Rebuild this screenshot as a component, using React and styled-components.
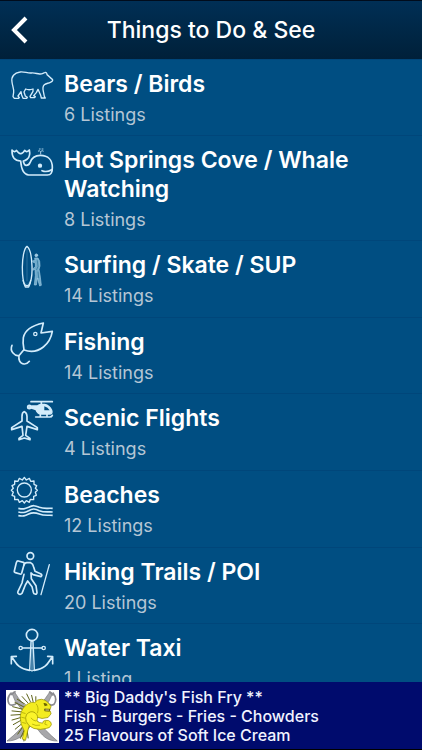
import React from "react";
import styled, { createGlobalStyle } from "styled-components";

const GlobalStyle = createGlobalStyle`
  * { box-sizing: border-box; }
  body {
    margin: 0;
    background: #000;
    font-family: Inter, "Liberation Sans", sans-serif;
    -webkit-font-smoothing: antialiased;
  }
`;

const Screen = styled.div`
  display: flex;
  flex-direction: column;
  height: 100vh;
  overflow: hidden;
  background: #004e82;
`;

const Header = styled.header`
  display: grid;
  grid-template-columns: 40px 1fr 40px;
  align-items: center;
  flex: none;
  height: 59px;
  border-top: 1px solid #000c1c;
  background: linear-gradient(#002f55, #002039);
`;

const BackButton = styled.button`
  display: flex;
  align-items: center;
  justify-content: center;
  height: 44px;
  padding: 0;
  border: 0;
  background: none;
  color: #fff;
  cursor: pointer;
`;

const PageTitle = styled.h1`
  margin: 0;
  color: #fff;
  font-size: 23px;
  font-weight: 500;
  line-height: 28px;
  text-align: center;
  white-space: nowrap;
`;

const List = styled.ul`
  flex: 1;
  min-height: 0;
  margin: 0;
  padding: 0;
  overflow-y: auto;
  list-style: none;
  scrollbar-width: none;
`;

const Item = styled.li`
  display: flex;
  min-height: 77px;
  border-top: 1px solid #00467a;

  &:nth-child(3n + 1) {
    min-height: 76px;
  }
`;

const ItemLink = styled.a`
  display: flex;
  flex: 1;
  gap: 8px;
  padding: 0 16px 0 8px;
  color: #fff;
  text-decoration: none;
`;

const ItemIcon = styled.svg`
  flex: none;
  width: 48px;
  height: 60px;
  fill: none;
  stroke: #d3ecfb;
  stroke-width: 5;
  stroke-linecap: round;
  stroke-linejoin: round;
`;

const ItemText = styled.div`
  padding: 10px 0 8px;
`;

const ItemTitle = styled.h2`
  margin: 0 0 4px;
  font-size: 23px;
  font-weight: 600;
  line-height: 29px;
`;

const ItemCount = styled.p`
  margin: 0;
  color: #b5c6d5;
  font-size: 18px;
  line-height: 24px;
`;

const Banner = styled.a`
  display: flex;
  align-items: center;
  flex: none;
  gap: 5px;
  height: 68px;
  padding: 1px 6px 0;
  border-bottom: 1px solid #000;
  background: #000b6d;
  color: #f1f3ff;
  text-decoration: none;
`;

const BannerLogo = styled.svg`
  flex: none;
  width: 53px;
  height: 53px;
`;

const BannerText = styled.p`
  margin: 0;
  font-size: 16px;
  font-weight: 500;
  line-height: 19px;
  white-space: pre-line;
`;

const Bear = () => (
  <ItemIcon viewBox="24 0 144 180" aria-hidden="true">
    <path
      strokeWidth="4"
      d="M36 66 C33 50 43 38 60 36 C72 34 82 40 94 39 C103 38 110 41 119 42 C126 43 129 39 134 38 C139 36 141 40 141 44 C147 48 151 54 157 58 C160 61 157 65 151 67 C145 70 138 70 133 74 C128 79 128 86 130 94 L133 109 L136 114 L124 114 L122 106 L114 88 L109 98 L101 107 L106 110 L104 113 L92 113 L90 109 L99 94 L99 87 C91 90 84 90 77 87 L72 96 L76 108 L82 112 L80 115 L69 115 L65 105 L63 95 L54 108 L58 113 L55 115 L43 115 L39 110 L41 97 C42 85 37 77 36 66Z"
    />
  </ItemIcon>
);

const Whale = () => (
  <ItemIcon viewBox="24 0 144 180" aria-hidden="true">
    <path d="M36 42 Q44 51 49 43 Q57 54 62 53 Q67 54 74 43 Q80 51 88 42 Q92 60 82 69 Q76 74 70 75 Q72 88 79 88 Q87 88 90 80 C95 65 104 58 121 58 C145 58 157 73 157 94 Q158 117 142 117 L86 117 Q65 115 62 75 Q35 75 36 42Z" />
    <path d="M126 104 Q140 110 155 101" />
    <circle cx="120" cy="89" r="4" fill="#d3ecfb" />
    <path strokeWidth="3" stroke="#a5cde5" d="M122 54 V47 Q120 43 115 45 M122 47 Q126 41 130 45 M118 39 H121 M126 39 H129" />
  </ItemIcon>
);

const Surf = () => (
  <ItemIcon viewBox="24 3 144 180" aria-hidden="true">
    <path strokeWidth="4" d="M81 19 C72 25 67 55 67 82 C67 108 70 129 76 141 L86 141 C93 127 97 105 96 79 C95 48 90 25 81 19Z" />
    <path strokeWidth="2" d="M81 28 V123 M73 126 L81 134 L89 126" stroke="#3c81ad" />
    <path strokeWidth="4" d="M69 122 Q74 138 81 137 Q88 138 92 121" />
    <circle cx="109" cy="46" r="4" fill="#9fcae3" stroke="#9fcae3" strokeWidth="3" />
    <path fill="#6faacb" stroke="#9fcae3" strokeWidth="2" d="M105 54 L114 54 Q121 62 120 78 L117 88 L120 104 L124 136 L119 138 L112 114 L109 135 L103 135 L106 107 L105 88 L98 91 V87 L106 80 L106 69 L98 66 L98 62 L104 62Z" />
    <path strokeWidth="2" stroke="#267099" d="M112 62 L114 79 L110 89 M114 96 L116 113" />
  </ItemIcon>
);

const Fish = () => (
  <ItemIcon viewBox="24 9 144 180" aria-hidden="true">
    <path d="M130 24 C101 30 75 43 70 68 C68 80 69 90 72 105 C95 113 115 108 130 96 C145 84 154 67 157 49 L123 54 Z" />
    <circle cx="106" cy="57" r="5" strokeWidth="4" />
    <path d="M71 105 L58 121 C45 125 28 109 36 91 M57 121 C55 134 59 146 72 147 Q81 148 88 139" />
  </ItemIcon>
);

const Flights = () => (
  <ItemIcon viewBox="24 6 144 180" aria-hidden="true">
    <path d="M72 59 Q66 61 66 73 V87 L35 107 V113 L66 103 L69 130 L57 139 V143 L73 138 L90 143 V139 L77 130 L81 103 L112 113 V107 L81 87 V73 Q80 61 72 59Z" />
    <circle cx="88" cy="45" r="5" fill="#72abd0" />
    <path d="M88 45 H112 M93 29 H157 M124 29 V38" />
    <path fill="#d3ecfb" strokeWidth="4" d="M95 42 L112 42 Q117 37 124 37 H134 Q149 40 155 55 Q159 66 148 66 H122 Q112 64 108 53 L94 48Z" />
    <path fill="#004e82" stroke="none" d="M133 43 Q144 46 149 55 H133Z" />
    <path d="M107 75 H149 Q155 75 157 70 M121 67 V75 M141 67 V75" />
  </ItemIcon>
);

const Beach = () => (
  <ItemIcon viewBox="24 3 144 180" aria-hidden="true">
    <circle cx="73" cy="60" r="21" strokeWidth="4" />
    <path
      strokeWidth="4"
      d="M73 22 L79 30 L88 25 L92 34 L102 33 L102 43 L110 47 L106 55 L112 61 L106 67 L109 76 L101 79 L101 89 L91 88 L88 97 L79 92 L73 99 L67 92 L58 97 L54 88 L44 89 L44 79 L36 76 L40 67 L34 61 L40 55 L36 47 L44 43 L44 33 L54 34 L58 25 L67 30 Z"
    />
    <path strokeLinecap="butt" d="M55 115 C70 118 74 117 86 112 C98 105 105 106 118 112 C132 117 142 114 158 115 M55 126 C70 129 74 128 86 122 C98 115 105 116 118 122 C132 128 142 125 158 126 M55 137 C70 139 74 138 86 132 C98 126 105 127 118 132 C132 138 142 135 158 136" />
  </ItemIcon>
);

const Hiker = () => (
  <ItemIcon viewBox="24 9 144 180" aria-hidden="true">
    <circle cx="91" cy="33" r="10" />
    <path d="M72 60 Q75 51 83 53 H92 Q99 56 101 66 L105 79 L123 87 Q128 91 123 95 L99 89 L93 84 L94 101 L108 122 L111 143 Q110 149 105 147 Q101 147 100 142 L96 125 L83 108 L76 120 L66 145 Q61 151 55 146 Q52 144 54 139 L66 114 L69 100 L72 88" />
    <path d="M55 48 L70 52 Q74 53 72 59 L65 85 Q64 88 60 87 L46 83 Q42 82 43 78 L49 53 Q51 47 55 48Z" />
    <path strokeWidth="4" d="M148 59 L123 149" />
  </ItemIcon>
);

const Anchor = () => (
  <ItemIcon viewBox="24 12 144 180" aria-hidden="true">
    <circle cx="96" cy="45" r="17" />
    <circle cx="62" cy="84" r="5" strokeWidth="4" />
    <circle cx="131" cy="84" r="5" strokeWidth="4" />
    <path strokeWidth="4" d="M67 84 H126 M93 63 L89 150 L96 153 L103 150 L99 63Z" />
    <path strokeWidth="2" d="M96 65 V150" />
    <path d="M34 131 V110 L49 109 M34 111 C47 120 44 143 89 151 M158 131 V110 L143 109 M158 111 C145 120 148 143 103 151" />
  </ItemIcon>
);

const SwordFishLogo = () => (
  <BannerLogo viewBox="17 20 160 160" role="img" aria-label="Fish with crossed swords">
    <path fill="#fff" d="M17 20 H177 V180 H17Z" />
    <g fill="#a7a7aa" stroke="#77777c" strokeWidth="2">
      <path d="M35 30 L42 25 L55 45 C85 81 121 131 172 174 C144 174 131 162 116 143 L45 54Z" />
      <path d="M158 30 L150 25 L136 45 C109 82 72 133 20 174 C49 174 66 160 80 143 L146 55Z" />
    </g>
    <g fill="none" stroke="#8b8b90" strokeWidth="5">
      <path d="M34 28 Q17 43 26 61 Q33 72 52 58 M158 28 Q174 47 162 63 Q151 70 140 57" />
      <path d="M32 35 L46 24 M147 25 L160 36" />
    </g>
    <g fill="none" stroke="#5d6217" strokeWidth="3">
      <path d="M91 56 L79 31 M83 59 L65 39 M76 64 L50 47 M71 71 L43 57 M67 78 L36 70 M64 86 L34 83 M62 94 L31 96 M62 103 L34 111 M63 111 L38 125 M67 120 L44 139 M70 128 L52 154 M75 135 L60 167 M99 56 L94 35 M107 55 L107 39" />
      <path d="M74 139 L71 175 M80 135 L84 166" />
    </g>
    <path
      fill="#f3ec20"
      stroke="#8a8400"
      strokeWidth="2"
      d="M84 61 Q94 55 104 58 Q110 48 124 48 Q142 50 153 70 L150 78 L134 76 L133 82 L151 84 L153 92 L144 103 L126 106 L110 102 L98 106 Q88 120 84 138 L76 172 L66 168 L72 143 Q59 124 60 99 Q63 74 84 61Z"
    />
    <path
      fill="#fbf42a"
      stroke="#8a8400"
      strokeWidth="2"
      d="M79 94 Q92 80 105 89 Q117 98 110 113 Q116 120 128 120 L129 115 Q134 110 145 112 Q155 116 154 125 Q150 136 138 136 Q121 142 101 136 Q84 130 78 115 Q74 103 79 94Z"
    />
    <path fill="none" stroke="#a19b00" strokeWidth="2" d="M92 104 Q98 112 108 114 M96 123 Q106 129 120 126 M65 88 L76 91 M63 102 L75 105 M66 118 L78 121 M108 62 Q117 72 112 90 M137 114 L134 123 L142 126" />
    <path fill="#6c6500" d="M130 60 Q139 58 143 66 L134 69Z M132 77 L151 77 L149 85 L134 84Z" />
    <path fill="#d5cf9c" d="M136 79 H147 V82 H136Z" />
  </BannerLogo>
);

const listings = [
  { title: "Bears / Birds", count: "6 Listings", Icon: Bear },
  { title: "Hot Springs Cove / Whale Watching", count: "8 Listings", Icon: Whale },
  { title: "Surfing / Skate / SUP", count: "14 Listings", Icon: Surf },
  { title: "Fishing", count: "14 Listings", Icon: Fish },
  { title: "Scenic Flights", count: "4 Listings", Icon: Flights },
  { title: "Beaches", count: "12 Listings", Icon: Beach },
  { title: "Hiking Trails / POI", count: "20 Listings", Icon: Hiker },
  { title: "Water Taxi", count: "1 Listing", Icon: Anchor },
];

export default function App() {
  return (
    <Screen>
      <GlobalStyle />
      <Header>
        <BackButton type="button" aria-label="Back">
          <svg width="18" height="28" viewBox="0 0 18 28" fill="none" stroke="currentColor" strokeWidth="4">
            <path d="M15 2 L3 14 L15 26" />
          </svg>
        </BackButton>
        <PageTitle>Things to Do &amp; See</PageTitle>
      </Header>
      <List>
        {listings.map(({ title, count, Icon }) => (
          <Item key={title}>
            <ItemLink href="#">
              <Icon />
              <ItemText>
                <ItemTitle>{title}</ItemTitle>
                <ItemCount>{count}</ItemCount>
              </ItemText>
            </ItemLink>
          </Item>
        ))}
      </List>
      <Banner href="#">
        <SwordFishLogo />
        <BannerText>
          {"** Big Daddy's Fish Fry **\nFish - Burgers - Fries - Chowders\n25 Flavours of Soft Ice Cream"}
        </BannerText>
      </Banner>
    </Screen>
  );
}
